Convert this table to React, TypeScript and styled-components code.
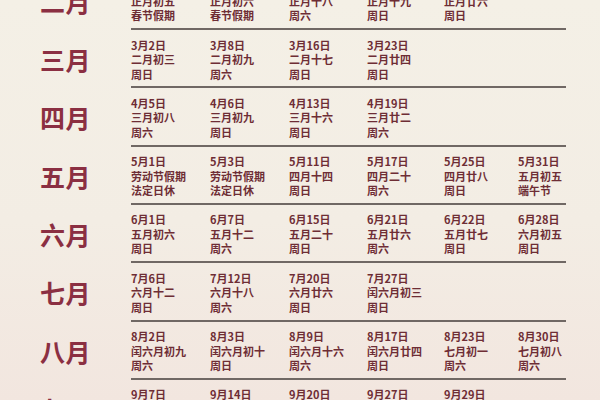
import React from "react";
import styled, { createGlobalStyle } from "styled-components";

const Global = createGlobalStyle`
  html, body { margin: 0; padding: 0; }
  body {
    width: 600px;
    height: 400px;
    overflow: hidden;
    background: linear-gradient(180deg, #f4f0e6 0%, #f3ede4 55%, #f2e6df 100%);
    font-family: "Noto Sans CJK SC", "Noto Sans", sans-serif;
  }
`;

const Page = styled.div`
  width: 600px;
  height: 400px;
  overflow: hidden;
`;

const List = styled.div`
  display: flex;
  flex-direction: column;
  margin-top: -28.33px;
`;

const Row = styled.div`
  display: grid;
  grid-template-columns: 131px 435px;
  height: 58.33px;
`;

const MonthLabel = styled.div`
  display: flex;
  align-items: center;
  justify-content: center;
  font-size: 25px;
  font-weight: 700;
  color: #8b2f42;
  letter-spacing: 0.5px;
`;

const Cells = styled.div`
  box-sizing: border-box;
  display: grid;
  grid-template-columns: 79px 79px 78px 77px 74px 48px;
  border-bottom: 2px solid #706864;
  padding-top: 7.5px;
`;

const Cell = styled.div`
  display: flex;
  flex-direction: column;
  font-size: 11px;
  line-height: 14.5px;
  font-weight: 700;
  color: #6e2d35;
  white-space: nowrap;
`;

type Entry = [string, string, string];

const data: { month: string; items: Entry[] }[] = [
  {
    month: "二月",
    items: [
      ["2月2日", "正月初五", "春节假期"],
      ["2月3日", "正月初六", "春节假期"],
      ["2月15日", "正月十八", "周六"],
      ["2月16日", "正月十九", "周日"],
      ["2月23日", "正月廿六", "周日"],
    ],
  },
  {
    month: "三月",
    items: [
      ["3月2日", "二月初三", "周日"],
      ["3月8日", "二月初九", "周六"],
      ["3月16日", "二月十七", "周日"],
      ["3月23日", "二月廿四", "周日"],
    ],
  },
  {
    month: "四月",
    items: [
      ["4月5日", "三月初八", "周六"],
      ["4月6日", "三月初九", "周日"],
      ["4月13日", "三月十六", "周日"],
      ["4月19日", "三月廿二", "周六"],
    ],
  },
  {
    month: "五月",
    items: [
      ["5月1日", "劳动节假期", "法定日休"],
      ["5月3日", "劳动节假期", "法定日休"],
      ["5月11日", "四月十四", "周日"],
      ["5月17日", "四月二十", "周六"],
      ["5月25日", "四月廿八", "周日"],
      ["5月31日", "五月初五", "端午节"],
    ],
  },
  {
    month: "六月",
    items: [
      ["6月1日", "五月初六", "周日"],
      ["6月7日", "五月十二", "周六"],
      ["6月15日", "五月二十", "周日"],
      ["6月21日", "五月廿六", "周六"],
      ["6月22日", "五月廿七", "周日"],
      ["6月28日", "六月初五", "周日"],
    ],
  },
  {
    month: "七月",
    items: [
      ["7月6日", "六月十二", "周日"],
      ["7月12日", "六月十八", "周六"],
      ["7月20日", "六月廿六", "周日"],
      ["7月27日", "闰六月初三", "周日"],
    ],
  },
  {
    month: "八月",
    items: [
      ["8月2日", "闰六月初九", "周六"],
      ["8月3日", "闰六月初十", "周日"],
      ["8月9日", "闰六月十六", "周六"],
      ["8月17日", "闰六月廿四", "周日"],
      ["8月23日", "七月初一", "周六"],
      ["8月30日", "七月初八", "周六"],
    ],
  },
  {
    month: "九月",
    items: [
      ["9月7日", "七月十六", "周日"],
      ["9月14日", "七月廿三", "周日"],
      ["9月20日", "七月廿九", "周六"],
      ["9月27日", "八月初六", "周六"],
      ["9月29日", "八月初八", "周一"],
    ],
  },
];

export default function App() {
  return (
    <Page>
      <Global />
      <List>
        {data.map((m) => (
          <Row key={m.month}>
            <MonthLabel>{m.month}</MonthLabel>
            <Cells>
              {m.items.map((it) => (
                <Cell key={it[0]}>
                  <span>{it[0]}</span>
                  <span>{it[1]}</span>
                  <span>{it[2]}</span>
                </Cell>
              ))}
            </Cells>
          </Row>
        ))}
      </List>
    </Page>
  );
}
